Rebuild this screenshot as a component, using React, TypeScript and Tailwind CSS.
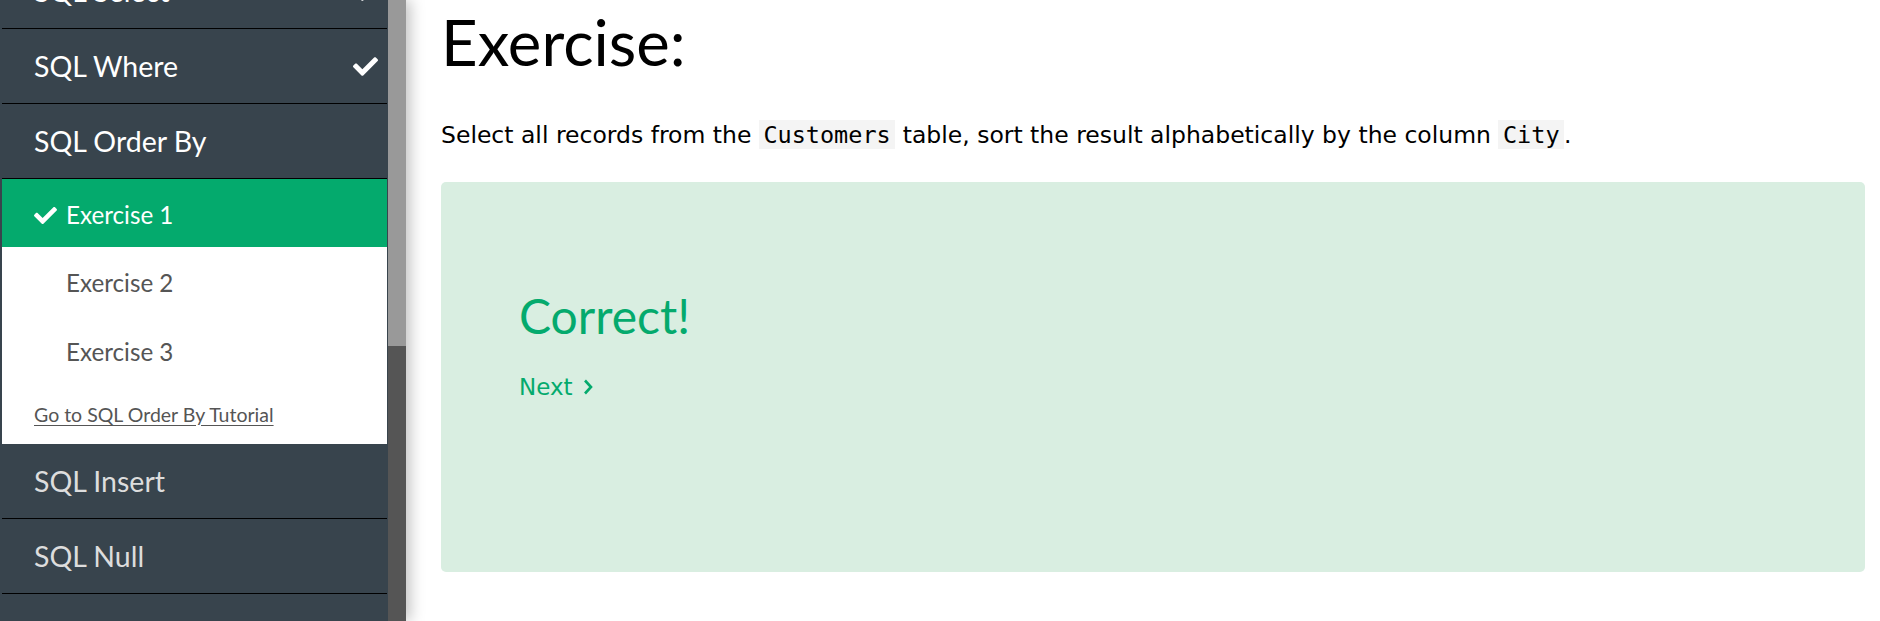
import React from 'react';
import { FaCheck } from 'react-icons/fa';

const segoe = { fontFamily: 'Lato, "Open Sans", sans-serif' };

const topics = [
  { name: 'SQL Select', done: true },
  { name: 'SQL Where', done: true },
  { name: 'SQL Order By', done: false, active: true },
];

const after = ['SQL Insert', 'SQL Null'];

const Sidebar = () => (
  <div className="w-[388px] shrink-0 bg-[#38444d] pl-[2px] pr-[1px] overflow-hidden" style={segoe}>
    <div className="-mt-[46px]">
      {topics.map((t) => (
        <div
          key={t.name}
          className="h-[75px] border-b border-black flex items-center justify-between pl-[32px] pr-[9px] text-white text-[28.5px] leading-none"
        >
          <span>{t.name}</span>
          {t.done && <FaCheck size={25} />}
        </div>
      ))}

      {/* sub menu of the open topic */}
      <div className="bg-white">
        <div className="h-[68px] bg-[#04aa6d] text-white flex items-center gap-[9px] pl-[32px] pt-[4px] text-[24.2px] leading-none">
          <FaCheck size={23} />
          <span>Exercise 1</span>
        </div>
        <div className="h-[69px] flex items-center pl-[64px] pt-[4px] text-[#555] text-[24.2px] leading-none">Exercise 2</div>
        <div className="h-[69px] flex items-center pl-[64px] pt-[4px] text-[#555] text-[24.2px] leading-none">Exercise 3</div>
        <div className="h-[59px] flex items-center pl-[32px] text-[19.5px] leading-none">
          <a href="#" className="text-[#555] underline underline-offset-[3px]">Go to SQL Order By Tutorial</a>
        </div>
      </div>

      {after.map((name) => (
        <div
          key={name}
          className="h-[75px] border-b border-black flex items-center pl-[32px] pt-[1px] text-[#dddddd] text-[28.5px] leading-none"
        >
          {name}
        </div>
      ))}
    </div>
  </div>
);

const Code = ({ children }: { children: React.ReactNode }) => (
  <span className="bg-[#f4f4f4] px-[4.5px] py-[0.5px]" style={{ fontFamily: '"DejaVu Sans Mono", "Liberation Mono", monospace' }}>
    {children}
  </span>
);

export default function App() {
  return (
    <div className="h-[621px] w-full flex overflow-hidden bg-white">
      <div className="flex shrink-0 relative z-10 shadow-[4px_0_14px_rgba(0,0,0,0.25)]">
        <Sidebar />
        {/* scrollbar */}
        <div className="w-[18px] flex flex-col">
          <div className="h-[346px] bg-[#999999]" />
          <div className="flex-1 bg-[#555555]" />
        </div>
      </div>

      <main className="flex-1 pl-[35px] pr-[15px]">
        <h2 className="text-[63.5px] leading-none mt-[10px] text-black" style={segoe}>
          Exercise:
        </h2>
        <p
          className="mt-[47px] text-[23.5px] leading-[28px] text-black"
          style={{ fontFamily: '"DejaVu Sans", Verdana, sans-serif' }}
        >
          Select all records from the <Code>Customers</Code> table, sort the result alphabetically by the column <Code>City</Code>.
        </p>

        <div className="mt-[33px] h-[390px] rounded-[5px] bg-[#d9eee1] pl-[78px] pt-[110px]">
          <div className="text-[48px] leading-none text-[#04aa6d]" style={segoe}>
            Correct!
          </div>
          <a
            href="#"
            className="mt-[36px] flex items-center gap-[10px] text-[23px] leading-none text-[#04aa6d]"
            style={{ fontFamily: '"DejaVu Sans", Verdana, sans-serif' }}
          >
            Next
            <svg width="10" height="16" viewBox="0 0 10 16" fill="none">
              <path d="M2 1.5 L8 8 L2 14.5" stroke="#04aa6d" strokeWidth="2.6" />
            </svg>
          </a>
        </div>
      </main>
    </div>
  );
}
